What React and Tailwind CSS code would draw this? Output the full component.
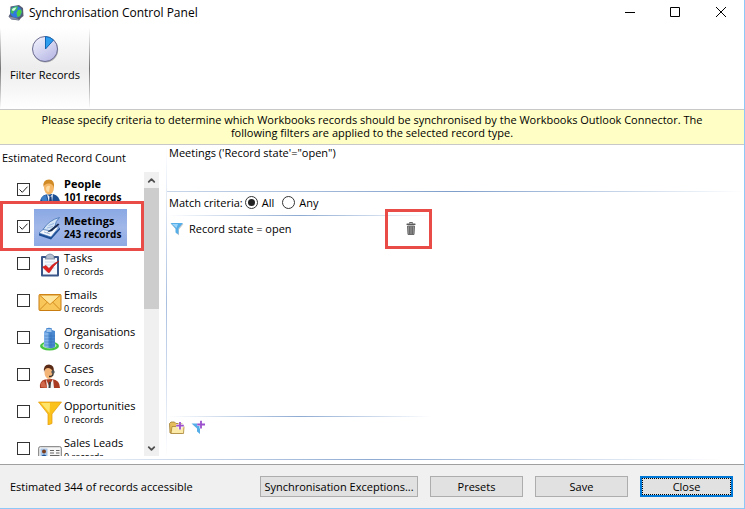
import { useState } from 'react';
import { ChevronDown, ChevronUp } from 'lucide-react';

const RECORD_TYPES = [
  { name: 'People', count: 101, icon: PeopleIcon },
  { name: 'Meetings', count: 243, icon: MeetingsIcon },
  { name: 'Tasks', count: 0, icon: TasksIcon },
  { name: 'Emails', count: 0, icon: EmailsIcon },
  { name: 'Organisations', count: 0, icon: OrganisationsIcon },
  { name: 'Cases', count: 0, icon: CasesIcon },
  { name: 'Opportunities', count: 0, icon: OpportunitiesIcon },
  { name: 'Sales Leads', count: 0, icon: SalesLeadsIcon },
];

function GlobeIcon() {
  return (
    <svg className="w-4 h-4 shrink-0" viewBox="0 0 16 16">
      <path d="M2.500 1.500L11 0L15 3L15.500 11L13 13L11 15.500L3.500 14.500L0.500 11.500L2 9Z" fill="#565c74" />
      <circle cx="8" cy="6.800" r="5.900" fill="#2f78e0" />
      <path d="M3 4Q6 0.500 10 1.500L9 5L6 6L5 9L2.500 7.500Z" fill="#3fb95a" />
      <path d="M10 5L13 4.500L13.800 7L12 11L9.500 12L8.500 8Z" fill="#4fd040" />
      <path d="M4 4Q6 2 8.500 2.500L6.500 5.500L4.500 6Z" fill="#d6f7ee" />
      <path d="M1 11.500L4 12L10.500 14L10.500 15L3.500 14.200Z" fill="#8790a8" />
    </svg>
  );
}

function PieIcon() {
  return (
    <svg className="w-7 h-7" viewBox="0 0 28 28">
      <defs>
        <linearGradient id="pie" x1="0" y1="0" x2="0.700" y2="1">
          <stop offset="0" stopColor="#f6f6ff" />
          <stop offset="1" stopColor="#b9b9e6" />
        </linearGradient>
      </defs>
      <circle cx="14.500" cy="14.800" r="12.700" fill="#00000044" />
      <circle cx="14" cy="14" r="12.500" fill="url(#pie)" stroke="#6a6c90" />
      <path d="M14.500 14V1.500A12.500 12.500 0 0 1 22.500 5Z" fill="#2d9df0" stroke="#1264b4" />
    </svg>
  );
}

function PeopleIcon() {
  return (
    <svg className="w-6 h-6" viewBox="0 0 24 24">
      <path d="M2 24Q2 17 8 15.500L15 15Q22 17 22 24Z" fill="#1c4f94" />
      <path d="M3 20Q4 17 8 16L10 24H6Z" fill="#3f7fc8" />
      <path d="M9 15L12 18L15 14.500L14 24H11Z" fill="#f4f7fb" />
      <path d="M11.500 17.500H13.500L14 23L12.500 24L11 23Z" fill="#1d3f7a" />
      <ellipse cx="11" cy="8.500" rx="5" ry="7" fill="#f5b766" />
      <path d="M5.500 8Q4.500 0.500 11 0.500Q17 0.500 16 9Q15 5 11.500 4.500Q7 4 5.500 8Z" fill="#d08a26" />
      <path d="M8 9Q9 6 12 7L11 13Q8 13 8 9Z" fill="#ffdca2" />
    </svg>
  );
}

function MeetingsIcon() {
  return (
    <svg className="w-6 h-6" viewBox="0 0 24 24">
      <path d="M1 17L13 20.500L22 11.500V13.500L13 23.500L1 19.500Z" fill="#1d4d94" />
      <path d="M1 17L8 11L21 11L13 21Z" fill="#f4f8fd" stroke="#4474b4" strokeWidth=".7" />
      <path d="M5 13.500Q11 4 21.500 1.500Q17.500 5 17 10L13.500 15Z" fill="#d3e4f7" stroke="#4474b4" strokeWidth=".8" />
      <path d="M10.500 9.500L16 7.500M9 12L15 10.500M6 16L12 18" stroke="#7fa2d0" strokeWidth=".7" />
      <path d="M21.500 8.500L14 15L9 16.500L12.500 13.500L20 7.500Z" fill="#182c52" />
    </svg>
  );
}

function TasksIcon() {
  return (
    <svg className="w-6 h-6" viewBox="0 0 24 24">
      <rect x="3" y="3" width="18" height="20.500" rx="1" fill="#3a5688" />
      <rect x="5" y="5" width="14" height="16.500" fill="#f5f8fd" />
      <path d="M8 5V3Q12 -1 16 3V5L17 6H7Z" fill="#b4bfcf" stroke="#6c7b95" strokeWidth=".7" />
      <path d="M7 9H17M7 12H17M7 15H17" stroke="#cbd8ea" />
      <path d="M4.500 14L8 12.500L11 15.500Q15 10 21 8Q15 13 11.500 19.500H10Z" fill="#e21f1f" stroke="#a81111" strokeWidth=".5" />
    </svg>
  );
}

function EmailsIcon() {
  return (
    <svg className="w-6 h-6" viewBox="0 0 24 24">
      <rect x="1" y="4.500" width="22" height="16" rx="1" fill="#f9c65a" stroke="#c97c10" />
      <path d="M1.500 20L9.500 12M22.500 20L14.500 12" stroke="#d08a1c" />
      <path d="M1.500 5L12 14.500L22.500 5Z" fill="#ffe69c" stroke="#d58c1b" />
    </svg>
  );
}

function OrganisationsIcon() {
  return (
    <svg className="w-6 h-6" viewBox="0 0 24 24">
      <ellipse cx="11.500" cy="19" rx="9.500" ry="4.500" fill="#45c443" />
      <ellipse cx="11.500" cy="18.500" rx="7" ry="3" fill="#b9eeb0" />
      <path d="M6 5L8 3V1.500Q11 0 14 1.500V3L17 4V20Q12 23 6 19Z" fill="#4a88cf" />
      <path d="M6 5L10.500 6V21Q8 21 6 19Z" fill="#82b3ea" />
      <path d="M8.500 2H13.500V5H8.500Z" fill="#9cc4ee" />
      <path d="M13 6V21M6.500 9H17M6.500 12H17M6.500 15H17M6.500 18H17" stroke="#3269ae" strokeWidth=".5" />
    </svg>
  );
}

function CasesIcon() {
  return (
    <svg className="w-6 h-6" viewBox="0 0 24 24">
      <path d="M2 24Q1 17 7 15.500L14 15Q22 16 22 24Z" fill="#a93b22" />
      <path d="M3 23Q2 18 6 17L9 24Z" fill="#d2684a" />
      <path d="M8 15L11 22L15 15L16 24H9Z" fill="#f2f2f2" />
      <path d="M11 18L13 18L12.500 24H10.500Z" fill="#404040" />
      <ellipse cx="11" cy="8.500" rx="4.500" ry="6.500" fill="#f3b478" />
      <path d="M6 8Q5 0.500 11 0.500Q17 1 15.500 8Q13 4 10 4Q7 4 6 8Z" fill="#5a2c18" />
      <path d="M15 6V10Q15 12.500 11 12.500" fill="none" stroke="#333" strokeWidth="1.300" />
      <circle cx="15" cy="8" r="1.700" fill="#555" />
    </svg>
  );
}

function OpportunitiesIcon() {
  return (
    <svg className="w-6 h-6" viewBox="0 0 24 24">
      <path d="M0.500 1H23.500L14 13V22.500L10 24V13Z" fill="#fcc21c" stroke="#e29a0c" strokeWidth=".7" />
      <path d="M3 2H12L11.500 12Z" fill="#ffe46b" />
    </svg>
  );
}

function SalesLeadsIcon() {
  return (
    <svg className="w-6 h-6" viewBox="0 0 24 24">
      <rect x="0.700" y="8.700" width="22.600" height="14" rx="1.500" fill="#f6f6f6" stroke="#777" />
      <rect x="2.500" y="10.500" width="7" height="11" fill="#a8c6ea" />
      <circle cx="6" cy="13.500" r="2" fill="#7a3e20" />
      <path d="M3 21.500Q3 16.500 6 16.500T9 21.500Z" fill="#1c4f94" />
      <path d="M12 12.500H16M18 12.500H21.500M12 15H16M18 15H21.500M12 17.500H21.500" stroke="#666" />
    </svg>
  );
}

function FunnelIcon() {
  return (
    <svg className="w-4 h-4" viewBox="0 0 16 16">
      <path d="M2 3H14.500L10 8.500V14.500L7 12V8.500Z" fill="#00000033" />
      <path d="M1.500 2H14L9.500 7.500V13.500L6.500 11.500V7.500Z" fill="#55aee8" />
      <path d="M3 3H9L7.500 7Z" fill="#9bd4f8" />
    </svg>
  );
}

function TrashIcon() {
  return (
    <svg className="w-4 h-4" viewBox="0 0 16 16">
      <path d="M6.500 2.500V1.500H9.500V2.500" fill="none" stroke="#666" />
      <rect x="3.500" y="2.500" width="9" height="1.600" rx=".5" fill="#5a5a5a" />
      <path d="M4.500 5H11.500L11 13.500H5Z" fill="#9a9a9a" stroke="#6a6a6a" />
      <path d="M6.500 5.500V13M8 5.500V13M9.500 5.500V13" stroke="#555" strokeWidth=".7" />
    </svg>
  );
}

function AddFolderIcon() {
  return (
    <svg className="w-4 h-4" viewBox="0 0 16 16">
      <path d="M0.500 3.500L2 2H5.500L7 3.500H13V13H1Z" fill="#e5bd5c" stroke="#a07c30" strokeWidth=".8" />
      <path d="M3 6.500H15L14.500 13.500H2Z" fill="#fbe9a8" stroke="#a88434" strokeWidth=".8" />
      <path d="M11 2V9.500M7.200 5.700H14.800" stroke="#fff" strokeWidth="3" />
      <path d="M11 2V9.500M7.200 5.700H14.800" stroke="#9c50cc" strokeWidth="1.800" />
    </svg>
  );
}

function AddFilterIcon() {
  return (
    <svg className="w-4 h-4" viewBox="0 0 16 16">
      <path d="M0.500 3.500H12.500L9 8.500V14L6 11.500V8.500Z" fill="#55aee8" />
      <path d="M10 0.700V8.500M6.200 4.500H14" stroke="#fff" strokeWidth="3" />
      <path d="M10 0.700V8.500M6.200 4.500H14" stroke="#9c50cc" strokeWidth="1.800" />
    </svg>
  );
}

function TitleBar() {
  return (
    <header className="flex h-7 items-center pb-0.5 pl-2 text-[12px]">
      <GlobeIcon />
      <h1 className="flex-1 pl-[5px] leading-4">Synchronisation Control Panel</h1>
      <button aria-label="Minimise" className="flex h-6 w-11 items-center justify-center">
        <svg className="w-3 h-3" viewBox="0 0 12 12" stroke="#000" fill="none"><path d="M1 5.500H11" /></svg>
      </button>
      <button aria-label="Maximise" className="flex h-6 w-[46px] items-center justify-center">
        <svg className="w-3 h-3" viewBox="0 0 12 12" stroke="#000" fill="none"><path d="M1.500 0.500H10.500V9.500H1.500Z" /></svg>
      </button>
      <button aria-label="Close window" className="flex h-6 w-[46px] items-center justify-center">
        <svg className="w-3 h-3" viewBox="0 0 12 12" stroke="#000" fill="none"><path d="M1 0L11 10M11 0L1 10" /></svg>
      </button>
    </header>
  );
}

function RecordRow({ type, checked, selected, onToggle }) {
  const Icon = type.icon;
  const bold = type.count > 0;
  return (
    <li className="relative flex h-[37px] items-center pl-[17px]">
      <label className="flex items-center">
        <span className="mr-1 mb-0.5 grid h-[13px] w-[13px]">
          <input
            type="checkbox"
            checked={checked}
            onChange={onToggle}
            className="peer col-start-1 row-start-1 h-[13px] w-[13px] appearance-none border border-[#333] bg-white"
          />
          <svg className="pointer-events-none invisible col-start-1 row-start-1 peer-checked:visible" viewBox="0 0 13 13" fill="none" stroke="#222">
            <path d="M2.500 6.500L5.300 9.300L10.500 3.700" />
          </svg>
        </span>
        <span
          className={
            selected
              ? 'flex h-[37px] w-[93px] items-center bg-linear-to-b from-[#8aa8e4] via-[#a0b7e8] to-[#8faae4] pl-1'
              : 'flex h-[37px] w-[93px] items-center pl-1'
          }
        >
          <span className="w-[26px] shrink-0"><Icon /></span>
          <span className={bold ? 'whitespace-nowrap font-bold' : 'whitespace-nowrap'}>
            <span className="block text-[11px] leading-[14px]">{type.name}</span>
            <span className={bold ? 'block text-[10px] leading-[13px]' : 'block text-[9px] leading-[13px]'}>
              {type.count} records
            </span>
          </span>
        </span>
      </label>
      {selected && <span className="pointer-events-none absolute inset-x-0 -top-2 z-10 h-[50px] border-3 border-[#e94b46]" />}
    </li>
  );
}

function Sidebar() {
  const [checked, setChecked] = useState(['People', 'Meetings']);

  const toggle = (name) =>
    setChecked(checked.includes(name) ? checked.filter((n) => n !== name) : [...checked, name]);

  return (
    <aside className="flex w-[166px] shrink-0 flex-col">
      <h2 className="h-[27px] pt-[5px] pl-[2px] text-[11px] leading-4">Estimated Record Count</h2>
      <div className="flex h-[284px]">
        <ul className="w-36 overflow-hidden">
          {RECORD_TYPES.map((type) => (
            <RecordRow
              key={type.name}
              type={type}
              checked={checked.includes(type.name)}
              selected={type.name === 'Meetings'}
              onToggle={() => toggle(type.name)}
            />
          ))}
        </ul>
        <div className="flex w-[15px] flex-col bg-[#f0f0f0] text-[#505050]">
          <button aria-label="Scroll up" className="flex h-4 items-center justify-center">
            <ChevronUp size={11} strokeWidth={4} />
          </button>
          <div className="h-[121px] bg-[#cdcdcd]" />
          <div className="flex-1" />
          <button aria-label="Scroll down" className="flex h-4 items-center justify-center">
            <ChevronDown size={11} strokeWidth={4} />
          </button>
        </div>
      </div>
    </aside>
  );
}

function MatchOption({ label, checked, onChange }) {
  return (
    <label className="flex items-center gap-1">
      <input
        type="radio"
        name="match"
        checked={checked}
        onChange={onChange}
        className="h-[13px] w-[13px] appearance-none rounded-full border border-[#333] bg-white p-0.5 bg-clip-content checked:bg-[#222]"
      />
      {label}
    </label>
  );
}

function Criteria() {
  const [match, setMatch] = useState('All');

  return (
    <section className="flex min-w-0 flex-1">
      <div className="w-px bg-linear-to-b from-white via-[#a9bfe0] to-white" />
      <div className="flex min-w-0 flex-1 flex-col text-[11px] leading-4">
        <p className="h-[46px] pl-[2px]">Meetings ('Record state'="open")</p>
        <div className="h-px bg-linear-to-r from-[#c9d7ea] via-[#7f9fcb] to-white" />
        <div className="flex h-[23px] items-center gap-2 pb-0.5 pl-[2px]">
          <span className="-mr-1.5">Match criteria:</span>
          <MatchOption label="All" checked={match === 'All'} onChange={() => setMatch('All')} />
          <MatchOption label="Any" checked={match === 'Any'} onChange={() => setMatch('Any')} />
        </div>
        <div className="flex w-[265px] flex-1 flex-col">
          <div className="h-px bg-linear-to-r from-white via-[#8fabd2] to-white" />
          <div className="flex h-[25px] items-center pl-[2px]">
            <FunnelIcon />
            <span className="flex-1 pl-1">Record state = open</span>
            <button aria-label="Delete filter" className="relative flex w-[47px] justify-center pl-1">
              <TrashIcon />
              <span className="pointer-events-none absolute inset-x-0 -inset-y-3 border-3 border-[#e94b46]" />
            </button>
          </div>
          <div className="flex-1" />
          <div className="h-px bg-linear-to-r from-white via-[#8fabd2] to-white" />
          <div className="flex h-[42px] items-start gap-1.5 pt-[3px] pl-[2px]">
            <button aria-label="Add group"><AddFolderIcon /></button>
            <button aria-label="Add filter"><AddFilterIcon /></button>
          </div>
        </div>
      </div>
    </section>
  );
}

export default function App() {
  return (
    <div className="flex min-h-screen flex-col border-r border-b border-[#8ec8f8] bg-white font-['Open_Sans','Noto_Sans',sans-serif] text-black">
      <TitleBar />
      <nav className="flex h-[81px]">
        <div className="w-px bg-linear-to-b from-white via-[#777] to-white" />
        <button className="flex w-[88px] flex-col items-center gap-1 bg-linear-to-b from-white via-[#ededed] to-white pt-[7px] text-[11px] leading-4">
          <PieIcon />
          Filter Records
        </button>
        <div className="w-px bg-linear-to-b from-white via-[#777] to-white" />
      </nav>
      <div className="flex h-9 items-center justify-center border-y border-[#c8c8c8] bg-[#ffffc5] px-8">
        <p className="pb-0.5 text-center text-[11px] leading-[13px]">
          Please specify criteria to determine which Workbooks records should be synchronised by the Workbooks Outlook Connector. The
          following filters are applied to the selected record type.
        </p>
      </div>
      <main className="flex flex-1">
        <Sidebar />
        <Criteria />
      </main>
      <div className="mx-5 h-px bg-linear-to-r from-white via-[#8fabd2] to-white" />
      <footer className="mt-1 flex h-11 items-center gap-3 border-t border-[#a0a0a0] bg-[#f0f0f0] pr-[11px] pl-[10px] text-[11px] leading-4">
        <p className="flex-1">Estimated 344 of records accessible</p>
        <button className="h-[21px] w-[158px] border border-[#adadad] bg-[#e1e1e1] leading-4">Synchronisation Exceptions...</button>
        <button className="h-[21px] w-[93px] border border-[#adadad] bg-[#e1e1e1] leading-4">Presets</button>
        <button className="h-[21px] w-[93px] border border-[#adadad] bg-[#e1e1e1] leading-4">Save</button>
        <button className="h-[21px] w-[93px] border-2 border-[#0078d7] bg-[#e1e1e1] leading-4 outline-1 -outline-offset-3 outline-dotted outline-black">Close</button>
      </footer>
    </div>
  );
}
